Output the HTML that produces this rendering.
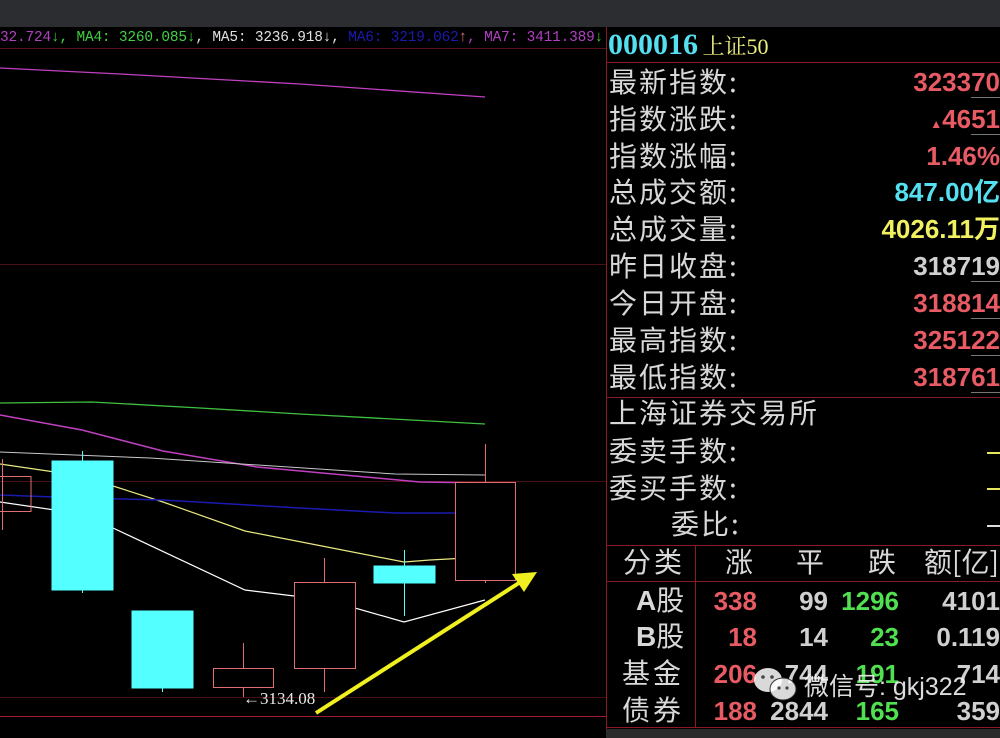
<!DOCTYPE html>
<html><head><meta charset="utf-8"><style>
*{margin:0;padding:0}
body{width:1000px;height:738px;overflow:hidden;background:#000;position:relative;font-family:"Liberation Sans","Noto Sans CJK SC",sans-serif}
#top{position:absolute;left:0;top:0;width:1000px;height:27px;background:#2b2d30}
#ma{position:absolute;left:0;top:28px;font:15px "Liberation Mono","Noto Sans CJK SC",monospace;letter-spacing:-0.2px;white-space:nowrap;line-height:20px;transform:scaleX(0.965);transform-origin:left}
.lab{position:absolute;left:609px;color:#d8d8d8;font:28px "Noto Sans CJK SC",sans-serif;letter-spacing:2px;line-height:32px;white-space:nowrap}
.val{position:absolute;right:0;font:bold 26px "Liberation Sans","Noto Sans CJK SC",sans-serif;line-height:32px;white-space:nowrap}
.t{position:absolute;font:bold 26px "Liberation Sans","Noto Sans CJK SC",sans-serif;line-height:30px;white-space:nowrap}
.tl{position:absolute;color:#d8d8d8;font:28px "Noto Sans CJK SC",sans-serif;letter-spacing:3px;line-height:32px;white-space:nowrap}
</style></head><body>
<div id="top"></div>
<div id="ma"><span style="color:#b040c0">32.724</span><span style="color:#40d040">↓</span><span style="color:#40d040">, MA4: 3260.085↓</span><span style="color:#e0e0e0">, MA5: 3236.918↓,</span><span style="color:#1a1ab0"> MA6: 3219.062</span><span style="color:#e07070">↑</span><span style="color:#b040c0">, MA7: 3411.389</span><span style="color:#40d040">↓</span></div>
<svg style="position:absolute;left:0;top:0" width="1000" height="738">
<line x1="0" y1="48.5" x2="606" y2="48.5" stroke="#5a1018"/>
<line x1="0" y1="264.5" x2="606" y2="264.5" stroke="#4a1018"/>
<line x1="0" y1="481.5" x2="606" y2="481.5" stroke="#4a1018"/>
<line x1="0" y1="697.5" x2="606" y2="697.5" stroke="#4a1018"/>
<line x1="0" y1="716.5" x2="606" y2="716.5" stroke="#a01c2c"/>
<line x1="606.5" y1="27" x2="606.5" y2="738" stroke="#8a1a24"/>
<rect x="606" y="729" width="394" height="9" fill="#2b2b2b"/>
<polyline fill="none" stroke="#c040c0" stroke-width="1.3" points="0,68 120,74 300,84 485,97"/>
<polyline fill="none" stroke="#40c040" stroke-width="1.3" points="0,403 92,402 200,408 300,414 485,424"/>
<polyline fill="none" stroke="#c040c0" stroke-width="1.5" points="0,415 82,430 163,451 257,467 420,482 485,483"/>
<polyline fill="none" stroke="#c8c8c8" stroke-width="1" points="0,452 150,458 395,474 485,475"/>
<polyline fill="none" stroke="#e8e880" stroke-width="1.2" points="0,464 82,476 113,486 163,502 245,531 327,547 404,562 430,560 485,557"/>
<polyline fill="none" stroke="#1a1ab0" stroke-width="1.5" points="0,495 82,498 163,500 300,508 395,513 485,513"/>
<polyline fill="none" stroke="#ffffff" stroke-width="1.2" points="0,502 82,514 113,528 245,590 327,600 404,622 485,600"/>
<g stroke="#e07070" fill="none">
<line x1="2.5" y1="459" x2="2.5" y2="530"/><rect x="-2" y="476.5" width="33" height="35"/>
<line x1="243.5" y1="643" x2="243.5" y2="697"/><rect x="213.5" y="668.5" width="60" height="19" fill="#000"/>
<line x1="324.5" y1="558" x2="324.5" y2="692"/><rect x="294.5" y="582.5" width="61" height="86" fill="#000"/>
<line x1="485.5" y1="444" x2="485.5" y2="583"/><rect x="455.5" y="482.5" width="60" height="98" fill="#000"/>
</g>
<g stroke="#54ffff" fill="#54ffff">
<line x1="82.5" y1="451" x2="82.5" y2="593"/><rect x="52" y="461" width="61" height="129"/>
<line x1="162.5" y1="688" x2="162.5" y2="692"/><rect x="132" y="611" width="61" height="77"/>
<line x1="404.5" y1="550" x2="404.5" y2="616"/><rect x="374" y="566" width="61" height="17"/>
</g>
<text x="243" y="704" fill="#e8e8e8" font-family="Liberation Serif" font-size="17">←3134.08</text>
<line x1="316" y1="713" x2="522" y2="581" stroke="#f0f020" stroke-width="4"/>
<polygon points="537,572 512,574 524,592" fill="#f0f020"/>
<line x1="606" y1="62.5" x2="1000" y2="62.5" stroke="#8a1a24"/>
<line x1="606" y1="397.5" x2="1000" y2="397.5" stroke="#8a1a24"/>
<line x1="606" y1="545.5" x2="1000" y2="545.5" stroke="#8a1a24"/>
<line x1="606" y1="581.5" x2="1000" y2="581.5" stroke="#8a1a24"/>
<line x1="606" y1="727.5" x2="1000" y2="727.5" stroke="#8a1a24"/>
<line x1="695.5" y1="545" x2="695.5" y2="728" stroke="#8a1a24"/>
<g stroke="#777"><line x1="971" y1="97.5" x2="1000" y2="97.5"/><line x1="971" y1="134.5" x2="1000" y2="134.5"/><line x1="971" y1="281.5" x2="1000" y2="281.5"/><line x1="971" y1="318.5" x2="1000" y2="318.5"/><line x1="971" y1="355.5" x2="1000" y2="355.5"/><line x1="971" y1="392.5" x2="1000" y2="392.5"/></g>
<g stroke="#e8e860" stroke-width="2"><line x1="987" y1="453" x2="1000" y2="453"/><line x1="987" y1="489" x2="1000" y2="489"/></g>
<line x1="987" y1="526" x2="1000" y2="526" stroke="#ddd" stroke-width="2"/>
</svg>
<div style="position:absolute;left:608px;top:28px;white-space:nowrap"><span style="color:#54e0f0;font:bold 30px 'Liberation Serif',serif">000016</span> <span style="color:#f0f080;font:22px 'Liberation Serif','Noto Serif CJK SC',serif">上证50</span></div>
<div class="lab" style="top:65px">最新指数:</div><div class="val" style="top:66px;color:#e85a64">323370</div>
<div class="lab" style="top:102px">指数涨跌:</div><div class="val" style="top:103px;color:#e85a64"><span style="font-size:12px">▲</span>4651</div>
<div class="lab" style="top:139px">指数涨幅:</div><div class="val" style="top:140px;color:#e85a64">1.46%</div>
<div class="lab" style="top:175px">总成交额:</div><div class="val" style="top:176px;color:#54e0f0">847.00亿</div>
<div class="lab" style="top:212px">总成交量:</div><div class="val" style="top:213px;color:#f0f060">4026.11万</div>
<div class="lab" style="top:249px">昨日收盘:</div><div class="val" style="top:250px;color:#d0d0d0">318719</div>
<div class="lab" style="top:286px">今日开盘:</div><div class="val" style="top:287px;color:#e85a64">318814</div>
<div class="lab" style="top:323px">最高指数:</div><div class="val" style="top:324px;color:#e85a64">325122</div>
<div class="lab" style="top:360px">最低指数:</div><div class="val" style="top:361px;color:#e85a64">318761</div>
<div class="lab" style="top:396px">上海证券交易所</div>
<div class="lab" style="top:434px">委卖手数:</div>
<div class="lab" style="top:471px">委买手数:</div>
<div class="lab" style="top:507px;left:671px">委比:</div>
<div class="tl" style="top:545px;left:623px">分类</div>
<div class="tl" style="top:545px;left:725px">涨</div>
<div class="tl" style="top:545px;left:796px">平</div>
<div class="tl" style="top:545px;left:868px">跌</div>
<div class="tl" style="top:545px;left:924px;letter-spacing:0">额[亿]</div>
<div class="tl" style="top:583px;left:636px;letter-spacing:0"><b style="font-family:'Liberation Sans'">A</b>股</div>
<div class="tl" style="top:619px;left:636px;letter-spacing:0"><b style="font-family:'Liberation Sans'">B</b>股</div>
<div class="tl" style="top:656px;left:622px">基金</div>
<div class="tl" style="top:693px;left:622px">债券</div>
<div class="t" style="top:586px;right:243px;color:#e85a64">338</div><div class="t" style="top:586px;right:172px;color:#d0d0d0">99</div><div class="t" style="top:586px;right:101px;color:#50e050">1296</div><div class="t" style="top:586px;right:0;color:#d0d0d0">4101</div>
<div class="t" style="top:622px;right:243px;color:#e85a64">18</div><div class="t" style="top:622px;right:172px;color:#d0d0d0">14</div><div class="t" style="top:622px;right:101px;color:#50e050">23</div><div class="t" style="top:622px;right:0;color:#d0d0d0">0.119</div>
<div class="t" style="top:659px;right:243px;color:#e85a64">206</div><div class="t" style="top:659px;right:172px;color:#d0d0d0">744</div><div class="t" style="top:659px;right:101px;color:#50e050">191</div><div class="t" style="top:659px;right:0;color:#d0d0d0">714</div>
<div class="t" style="top:696px;right:243px;color:#e85a64">188</div><div class="t" style="top:696px;right:172px;color:#d0d0d0">2844</div><div class="t" style="top:696px;right:101px;color:#50e050">165</div><div class="t" style="top:696px;right:0;color:#d0d0d0">359</div>
<svg style="position:absolute;left:752px;top:665px" width="50" height="40">
<ellipse cx="16" cy="15" rx="14" ry="12" fill="#fff" fill-opacity="0.85"/>
<ellipse cx="31" cy="24" rx="13" ry="11" fill="#fff" fill-opacity="0.85" stroke="#333" stroke-width="1"/>
<circle cx="11" cy="12" r="1.8" fill="#444"/><circle cx="20" cy="12" r="1.8" fill="#444"/>
<circle cx="27" cy="23" r="1.6" fill="#444"/><circle cx="35" cy="23" r="1.6" fill="#444"/>
</svg>
<div style="position:absolute;left:804px;top:667px;color:#f4f4f4;opacity:0.9;font:25px 'Liberation Sans','Noto Sans CJK SC',sans-serif;white-space:nowrap">微信号: gkj322</div>
</body></html>
